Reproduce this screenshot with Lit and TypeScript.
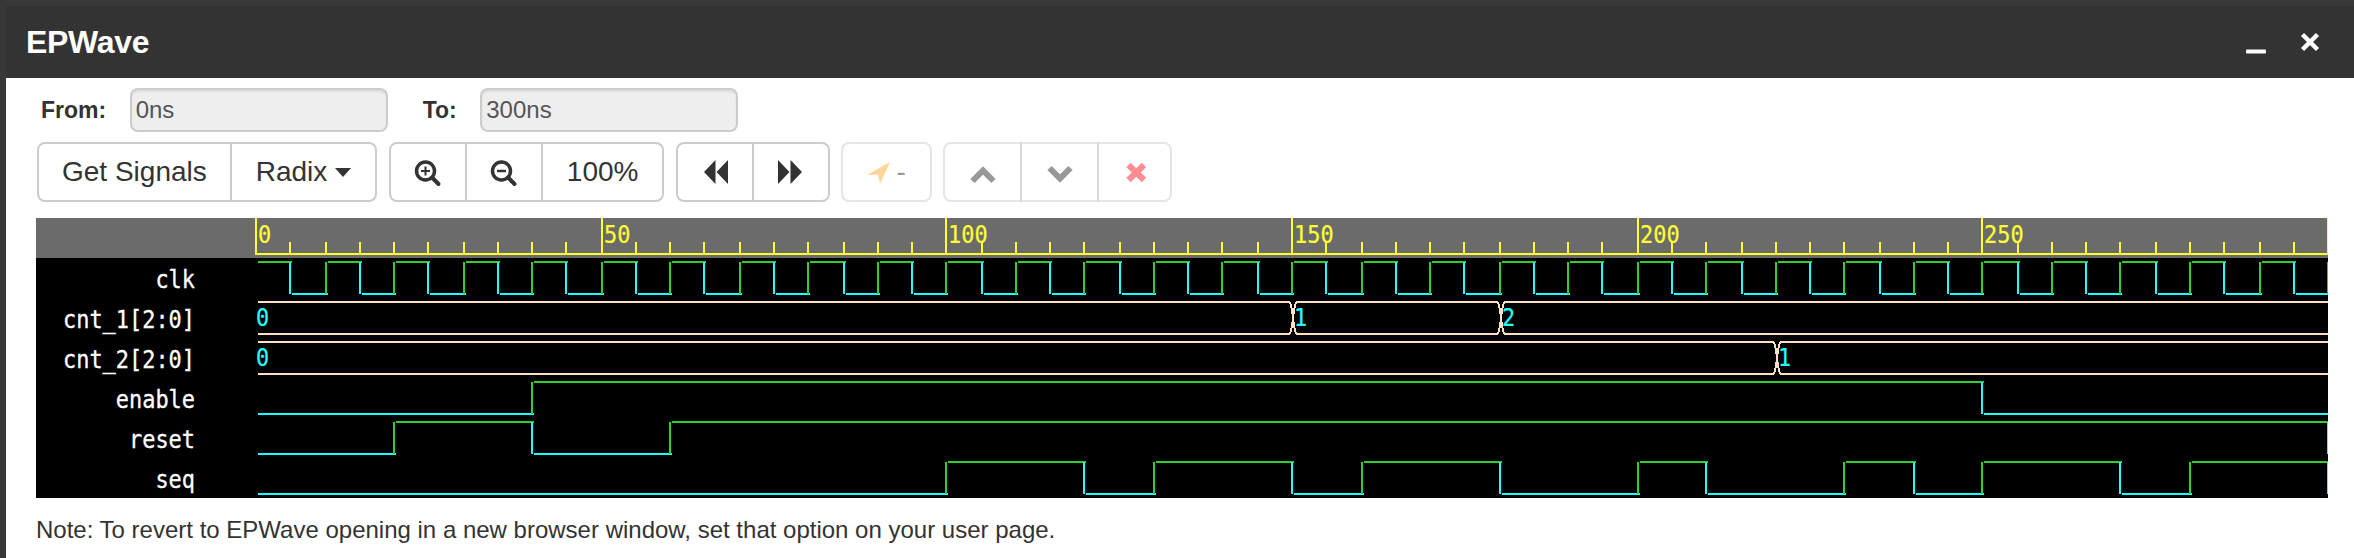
import { LitElement, html, svg, css } from 'lit';
import { customElement } from 'lit/decorators.js';

type BitSignal = { name: string; start: 0 | 1; edges: number[] };
type BusSignal = { name: string; values: [number, string][] };

const clkEdges = Array.from({ length: 60 }, (_, i) => (i + 1) * 5);

const bits: Record<string, BitSignal> = {
  clk: { name: 'clk', start: 1, edges: clkEdges },
  enable: { name: 'enable', start: 0, edges: [40, 250] },
  reset: { name: 'reset', start: 0, edges: [20, 40, 60, 300] },
  seq: { name: 'seq', start: 0, edges: [100, 120, 130, 150, 160, 180, 200, 210, 230, 240, 250, 270, 280, 300] },
};

const buses: Record<string, BusSignal> = {
  cnt_1: { name: 'cnt_1[2:0]', values: [[0, '0'], [150, '1'], [180, '2']] },
  cnt_2: { name: 'cnt_2[2:0]', values: [[0, '0'], [220, '1']] },
};

const rows = [bits.clk, buses.cnt_1, buses.cnt_2, bits.enable, bits.reset, bits.seq];

const GREEN = '#33cc33';
const CYAN = '#22ffff';
const BUS = '#ffe0c4';
const YELLOW = '#ffff33';
const END = 300;
const CHAR = 13.2;

// canvas x of a time, wave panel starts at page x 36
const tx = (t: number) => 2 * Math.round((256 + 6.907 * t) / 2) - 36;

@customElement('wave-view')
export class WaveView extends LitElement {
  static styles = css`
    :host {
      display: block;
      width: 2292px;
      height: 280px;
    }

    svg {
      display: block;
      background: #000;
    }

    text {
      font-family: 'DejaVu Sans Mono', monospace;
      font-size: 24px;
    }

    .label {
      fill: #fff;
      stroke: #fff;
      stroke-width: 0.3;
      text-anchor: end;
    }

    .tick-label {
      fill: #ffff33;
      stroke: #ffff33;
      stroke-width: 0.2;
      font-size: 25px;
    }

    .value {
      fill: #22ffff;
      stroke: #22ffff;
      stroke-width: 0.2;
      font-size: 25px;
    }

    line,
    polyline {
      fill: none;
      stroke-width: 2;
      shape-rendering: crispEdges;
    }
  `;

  ruler() {
    const ticks = [];
    for (let t = 0; t <= END; t += 5) {
      const major = t % 50 === 0;
      ticks.push(svg`<line x1=${tx(t)} x2=${tx(t)} y1=${major ? 0 : 24} y2="36" stroke=${YELLOW}></line>`);
      if (major && t < END) {
        const label = String(t);
        ticks.push(svg`<text class="tick-label" x=${tx(t) + 2} y="25" textLength=${label.length * CHAR} lengthAdjust="spacingAndGlyphs">${label}</text>`);
      }
    }
    return svg`
      <rect x="0" y="0" width="2292" height="40" fill="#6b6b6b"></rect>
      <line x1="219" x2="2292" y1="36" y2="36" stroke=${YELLOW}></line>
      ${ticks}`;
  }

  bit(sig: BitSignal, top: number) {
    const low = top + 32;
    const parts = [];
    let level = sig.start;
    let from = 0;
    for (const t of [...sig.edges, END + 1]) {
      const a = tx(from) + 2;
      const b = t > END ? 2292 : tx(t) + 2;
      const y = level ? top : low;
      parts.push(svg`<line x1=${a} x2=${b} y1=${y} y2=${y} stroke=${level ? GREEN : CYAN}></line>`);
      if (t <= END) {
        parts.push(svg`<line x1=${tx(t)} x2=${tx(t)} y1=${top} y2=${low} stroke=${level ? CYAN : GREEN}></line>`);
      }
      level = level ? 0 : 1;
      from = t;
    }
    return parts;
  }

  bus(sig: BusSignal, top: number) {
    const low = top + 32;
    const parts = [];
    sig.values.forEach(([t, value], i) => {
      const next = sig.values[i + 1];
      const a = i === 0 ? tx(0) + 2 : tx(t) + 4;
      const b = next ? tx(next[0]) - 2 : 2292;
      parts.push(svg`<line x1=${a} x2=${b} y1=${top} y2=${top} stroke=${BUS}></line>`);
      parts.push(svg`<line x1=${a} x2=${b} y1=${low} y2=${low} stroke=${BUS}></line>`);
      parts.push(svg`<text class="value" x=${i === 0 ? tx(0) : tx(t) + 2} y=${top + 24} textLength=${CHAR} lengthAdjust="spacingAndGlyphs">${value}</text>`);
      if (next) {
        const x = tx(next[0]);
        parts.push(svg`<polyline stroke=${BUS} points="${x - 2},${top} ${x},${top + 8} ${x + 1},${top + 16} ${x},${low - 8} ${x - 2},${low}"></polyline>`);
        parts.push(svg`<polyline stroke=${BUS} points="${x + 4},${top} ${x + 2},${top + 8} ${x + 1},${top + 16} ${x + 2},${low - 8} ${x + 4},${low}"></polyline>`);
      }
    });
    return parts;
  }

  render() {
    return html`<svg width="2292" height="280" viewBox="0 0 2292 280">
      ${this.ruler()}
      ${rows.map((sig, i) => {
        const top = 44 + 40 * i;
        return svg`
          <text class="label" x="159" y=${top + 26} textLength=${sig.name.length * CHAR} lengthAdjust="spacingAndGlyphs">${sig.name}</text>
          ${'edges' in sig ? this.bit(sig, top) : this.bus(sig, top)}`;
      })}
    </svg>`;
  }
}

const icon = (content: unknown, width = 26) =>
  html`<svg class="icon" width=${width} height="26" viewBox="0 0 ${width} 26">${content}</svg>`;

const icons = {
  zoomIn: icon(svg`
    <circle cx="10.5" cy="12" r="9" fill="none" stroke="#333" stroke-width="3.5"></circle>
    <path d="M17 18.5 L23.5 25" stroke="#333" stroke-width="4" stroke-linecap="round"></path>
    <path d="M6 12 H15 M10.5 7.5 V16.5" stroke="#333" stroke-width="2"></path>`),
  zoomOut: icon(svg`
    <circle cx="10.5" cy="12" r="9" fill="none" stroke="#333" stroke-width="3.5"></circle>
    <path d="M17 18.5 L23.5 25" stroke="#333" stroke-width="4" stroke-linecap="round"></path>
    <path d="M6 12 H15" stroke="#333" stroke-width="2.5"></path>`),
  backward: icon(svg`<path fill="#333" d="M2 13 L13.5 1 V25 Z M14.5 13 L26 1 V25 Z"></path>`),
  forward: icon(svg`<path fill="#333" d="M24 13 L12.5 1 V25 Z M11.5 13 L0 1 V25 Z"></path>`),
  arrow: icon(svg`<path fill="#ffad33" d="M23 3 L0 16 L11 15.5 L13 25 Z"></path>`, 29),
  up: icon(svg`<path fill="none" stroke="#333" stroke-width="6" d="M3.5 22 L14 11.5 L24.5 22"></path>`, 27),
  down: icon(svg`<path fill="none" stroke="#333" stroke-width="6" d="M3.5 9 L14 19.5 L24.5 9"></path>`, 27),
  remove: icon(svg`<path fill="none" stroke="#ff1a2a" stroke-width="6" d="M5.5 6 L21 21 M21 6 L5.5 21"></path>`, 22.6),
};

@customElement('app-root')
export class AppRoot extends LitElement {
  static styles = css`
    :host {
      display: block;
      height: 558px;
      padding: 6px 0 0 6px;
      box-sizing: border-box;
      overflow: hidden;
      background: #383838;
      font-family: 'Liberation Sans', Arial, sans-serif;
      color: #333;
    }

    .window {
      height: 552px;
      background: #fff;
    }

    .title-bar {
      display: flex;
      align-items: center;
      gap: 34px;
      height: 72px;
      padding: 0 34px 0 20px;
      background: #333;
      box-sizing: border-box;
    }

    .title-bar h1 {
      flex: 1;
      margin: 0;
      font-size: 32px;
      font-weight: 700;
      letter-spacing: -0.3px;
      color: #fff;
    }

    .range {
      display: flex;
      align-items: center;
      height: 44px;
      padding: 10px 0 0 35px;
      font-size: 23px;
    }

    .range label {
      font-weight: 700;
    }

    .range input {
      box-sizing: border-box;
      width: 258px;
      height: 44px;
      margin: 0 35px 0 23.5px;
      padding: 0 4px;
      border: 2px solid #ccc;
      border-radius: 8px;
      background: #eee;
      box-shadow: inset 0 2px 2px rgba(0, 0, 0, 0.07);
      font: inherit;
      font-size: 24px;
      color: #555;
    }

    .toolbar {
      display: flex;
      gap: 11.5px;
      margin-top: 10px;
      padding-left: 31px;
    }

    .group {
      display: flex;
    }

    .btn {
      display: flex;
      align-items: center;
      box-sizing: border-box;
      height: 60px;
      padding: 0 24px;
      border: 2px solid #ccc;
      background: #fff;
      font-size: 28px;
      color: #333;
      white-space: nowrap;
    }

    .btn.signals {
      padding: 0 23px;
    }

    .btn + .btn {
      margin-left: -2px;
    }

    .btn:first-child {
      border-radius: 8px 0 0 8px;
    }

    .btn:last-child {
      border-radius: 0 8px 8px 0;
    }

    .btn:only-child {
      border-radius: 8px;
    }

    .btn.disabled {
      opacity: 0.5;
    }

    .caret {
      width: 0;
      height: 0;
      margin-left: 8px;
      border-top: 9px solid #333;
      border-left: 8px solid transparent;
      border-right: 8px solid transparent;
    }

    .icon {
      display: block;
      overflow: visible;
    }

    .wave {
      margin: 16px 0 0 30px;
    }

    .note {
      margin: 16px 0 0 30px;
      font-size: 24px;
      line-height: 32px;
    }
  `;

  render() {
    return html`<div class="window">
      <header class="title-bar">
        <h1>EPWave</h1>
        <svg width="20" height="24" viewBox="0 0 20 24"><rect x="0" y="19.5" width="20" height="4" rx="1" fill="#fff"></rect></svg>
        <svg width="20" height="24" viewBox="0 0 20 24"><path d="M2.5 4.5 L17.5 19.5 M17.5 4.5 L2.5 19.5" stroke="#fff" stroke-width="4.5" fill="none"></path></svg>
      </header>
      <div class="range">
        <label>From:</label><input disabled value="0ns" />
        <label>To:</label><input disabled value="300ns" />
      </div>
      <div class="toolbar">
        <div class="group">
          <div class="btn signals">Get Signals</div>
          <div class="btn">Radix<span class="caret"></span></div>
        </div>
        <div class="group">
          <div class="btn">${icons.zoomIn}</div>
          <div class="btn">${icons.zoomOut}</div>
          <div class="btn">100%</div>
        </div>
        <div class="group">
          <div class="btn">${icons.backward}</div>
          <div class="btn">${icons.forward}</div>
        </div>
        <div class="group">
          <div class="btn disabled">${icons.arrow}-</div>
        </div>
        <div class="group">
          <div class="btn disabled">${icons.up}</div>
          <div class="btn disabled">${icons.down}</div>
          <div class="btn disabled">${icons.remove}</div>
        </div>
      </div>
      <wave-view class="wave"></wave-view>
      <p class="note">Note: To revert to EPWave opening in a new browser window, set that option on your user page.</p>
    </div>`;
  }
}
